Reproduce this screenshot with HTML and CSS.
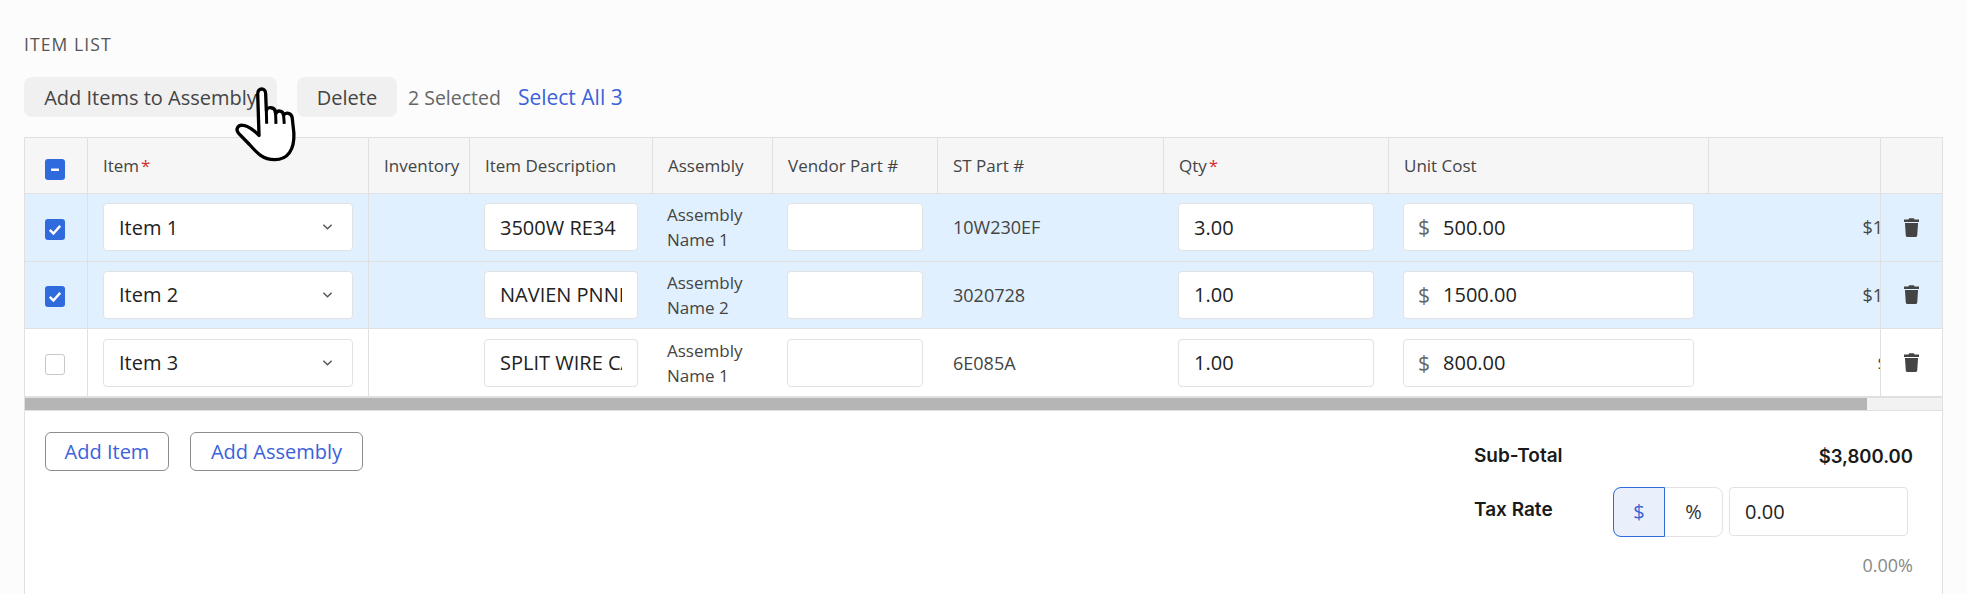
FILE: index.html
```html
<!DOCTYPE html>
<html lang="en">
<head>
    <meta charset="UTF-8">
    <title>Item List</title>
    <link rel="stylesheet" href="styles.css">
</head>
<body>
    <main class="page">
        <h2 class="section-title">Item List</h2>

        <div class="toolbar">
            <button class="btn-gray">Add Items to Assembly</button>
            <button class="btn-gray btn-delete">Delete</button>
            <span class="selected-count">2 Selected</span>
            <a class="select-all">Select All 3</a>
        </div>

        <div class="table-wrap">
            <div class="table-scroll">
                <table class="items">
                    <colgroup>
                        <col class="c-check"><col class="c-item"><col class="c-inv"><col class="c-desc">
                        <col class="c-asm"><col class="c-vendor"><col class="c-part"><col class="c-qty">
                        <col class="c-cost"><col class="c-total"><col class="c-action">
                    </colgroup>
                    <thead>
                        <tr>
                            <th class="cell-check">
                                <span class="box on"><svg viewBox="0 0 20 20"><rect x="6" y="9" width="8" height="2.4" rx=".6" fill="#fff"/></svg></span>
                            </th>
                            <th>Item<span class="req">*</span></th>
                            <th>Inventory</th>
                            <th>Item Description</th>
                            <th>Assembly</th>
                            <th>Vendor Part #</th>
                            <th>ST Part #</th>
                            <th>Qty<span class="req">*</span></th>
                            <th>Unit Cost</th>
                            <th></th>
                            <th class="cell-action"></th>
                        </tr>
                    </thead>
                    <tbody>
                        <tr class="picked">
                            <td class="cell-check"><span class="box on"><svg viewBox="0 0 20 20"><path d="M4.8 10.4l3.6 3.6 6.8-7.6" fill="none" stroke="#fff" stroke-width="2.4"/></svg></span></td>
                            <td class="cell-item">
                                <div class="select-wrap">
                                    <select><option>Item 1</option></select>
                                    <svg class="chevron" viewBox="0 0 12 8"><path d="M1.5 1.5L6 6l4.5-4.5" fill="none" stroke="#555" stroke-width="1.6"/></svg>
                                </div>
                            </td>
                            <td></td>
                            <td><input type="text" value="3500W RE34"></td>
                            <td class="cell-asm">Assembly<br>Name 1</td>
                            <td><input type="text"></td>
                            <td class="cell-part">10W230EF</td>
                            <td><input type="text" value="3.00"></td>
                            <td>
                                <div class="money"><span>$</span><input type="text" value="500.00"></div>
                            </td>
                            <td class="cell-total">$1,500.00</td>
                            <td class="cell-action"><svg class="trash" viewBox="0 0 16 20"><path d="M5.5 0h5l.8 1.5H16v2.6H0V1.5h4.7zM1 5.2h14l-.9 13.2c-.1.9-.8 1.6-1.7 1.6H3.6c-.9 0-1.6-.7-1.7-1.6z" fill="#444"/></svg></td>
                        </tr>
                        <tr class="picked">
                            <td class="cell-check"><span class="box on"><svg viewBox="0 0 20 20"><path d="M4.8 10.4l3.6 3.6 6.8-7.6" fill="none" stroke="#fff" stroke-width="2.4"/></svg></span></td>
                            <td class="cell-item">
                                <div class="select-wrap">
                                    <select><option>Item 2</option></select>
                                    <svg class="chevron" viewBox="0 0 12 8"><path d="M1.5 1.5L6 6l4.5-4.5" fill="none" stroke="#555" stroke-width="1.6"/></svg>
                                </div>
                            </td>
                            <td></td>
                            <td><input type="text" value="NAVIEN PNNPB"></td>
                            <td class="cell-asm">Assembly<br>Name 2</td>
                            <td><input type="text"></td>
                            <td class="cell-part">3020728</td>
                            <td><input type="text" value="1.00"></td>
                            <td>
                                <div class="money"><span>$</span><input type="text" value="1500.00"></div>
                            </td>
                            <td class="cell-total">$1,500.00</td>
                            <td class="cell-action"><svg class="trash" viewBox="0 0 16 20"><path d="M5.5 0h5l.8 1.5H16v2.6H0V1.5h4.7zM1 5.2h14l-.9 13.2c-.1.9-.8 1.6-1.7 1.6H3.6c-.9 0-1.6-.7-1.7-1.6z" fill="#444"/></svg></td>
                        </tr>
                        <tr>
                            <td class="cell-check"><span class="box"></span></td>
                            <td class="cell-item">
                                <div class="select-wrap">
                                    <select><option>Item 3</option></select>
                                    <svg class="chevron" viewBox="0 0 12 8"><path d="M1.5 1.5L6 6l4.5-4.5" fill="none" stroke="#555" stroke-width="1.6"/></svg>
                                </div>
                            </td>
                            <td></td>
                            <td><input type="text" value="SPLIT WIRE CABLE"></td>
                            <td class="cell-asm">Assembly<br>Name 1</td>
                            <td><input type="text"></td>
                            <td class="cell-part">6E085A</td>
                            <td><input type="text" value="1.00"></td>
                            <td>
                                <div class="money"><span>$</span><input type="text" value="800.00"></div>
                            </td>
                            <td class="cell-total">$800.00</td>
                            <td class="cell-action"><svg class="trash" viewBox="0 0 16 20"><path d="M5.5 0h5l.8 1.5H16v2.6H0V1.5h4.7zM1 5.2h14l-.9 13.2c-.1.9-.8 1.6-1.7 1.6H3.6c-.9 0-1.6-.7-1.7-1.6z" fill="#444"/></svg></td>
                        </tr>
                    </tbody>
                </table>
            </div>
            <div class="scroll-track"><div class="scroll-thumb"></div></div>
        </div>

        <section class="summary">
            <div class="add-buttons">
                <button class="btn-outline btn-add-item">Add Item</button>
                <button class="btn-outline btn-add-asm">Add Assembly</button>
            </div>
            <div class="totals">
                <div class="total-row">
                    <span class="total-label">Sub-Total</span>
                    <span class="total-value">$3,800.00</span>
                </div>
                <div class="tax-row">
                    <span class="total-label">Tax Rate</span>
                    <div class="toggle">
                        <span class="toggle-on">$</span>
                        <span class="toggle-off">%</span>
                    </div>
                    <input class="tax-input" type="text" value="0.00">
                </div>
                <div class="tax-percent">0.00%</div>
            </div>
        </section>
    </main>

    <!-- Mouse pointer from the screen recording -->
    <svg class="pointer" viewBox="100 45 195 235">
        <path d="M174 72C174 52 198 52 198 72L200 122C202 110 226 110 227 126L228 132C232 120 250 120 252 136C258 126 276 128 278 144L283 190C285 240 265 270 225 270C190 270 172 250 150 225L118 192C105 178 115 163 132 167C147 170 165 184 178 197Z" fill="#fff" stroke="#000" stroke-width="10" stroke-linejoin="round"/>
        <path d="M200 122L201 162M228 132L229 162M252 136L254 162" fill="none" stroke="#000" stroke-width="9"/>
    </svg>
</body>
</html>
```

FILE: styles.css
```css
/* Basic CSS Reset */
* {
    box-sizing: border-box;
    margin: 0;
    padding: 0;
}

html, body {
    height: 594px;
    overflow: hidden;
}

body {
    background: #fcfcfc;
    color: #333;
    font-family: "Open Sans", "Noto Sans", sans-serif;
    position: relative;
}

.page {
    padding: 34px 24px 0;
}

/* Header */
.section-title {
    font-size: 17.5px;
    line-height: 20px;
    font-weight: 400;
    text-transform: uppercase;
    letter-spacing: 1.1px;
    color: #555;
}

.toolbar {
    display: flex;
    align-items: center;
    margin-top: 23px;
    height: 40px;
    font-size: 20px;
}

.btn-gray {
    height: 40px;
    width: 253px;
    border: 0;
    border-radius: 8px;
    background: #f0f0f0;
    color: #444;
    font: inherit;
}

.btn-delete {
    width: 100px;
    margin-left: 20px;
}

.selected-count {
    margin-left: 11px;
    font-size: 19.5px;
    color: #666;
}

.select-all {
    margin-left: 17px;
    font-size: 21px;
    color: #3b62d9;
}

/* Table */
.table-wrap {
    margin-top: 20px;
    border: 1px solid #e0e0e0;
    border-bottom: 0;
    background: #fff;
}

.table-scroll {
    overflow: hidden;
}

.items {
    table-layout: fixed;
    width: 1996px;
    border-collapse: separate;
    border-spacing: 0;
}

.c-check { width: 63px; }
.c-item { width: 281px; }
.c-inv { width: 101px; }
.c-desc { width: 183px; }
.c-asm { width: 120px; }
.c-vendor { width: 165px; }
.c-part { width: 226px; }
.c-qty { width: 225px; }
.c-cost { width: 320px; }
.c-total { width: 250px; }
.c-action { width: 62px; }

th {
    height: 56px;
    padding: 0 15px;
    background: #f6f6f6;
    border-right: 1px solid #e0e0e0;
    border-bottom: 1px solid #e0e0e0;
    font-size: 17px;
    font-weight: 400;
    color: #444;
    text-align: left;
    white-space: nowrap;
}

th:last-child {
    border-right: 0;
}

th.cell-check {
    padding: 0 0 0 20px;
}

th .box {
    margin-top: 8px;
}

.req {
    margin-left: 2px;
    color: #d32f2f;
}

td {
    height: 67.67px;
    padding: 0 15px 0 14px;
    border-bottom: 1px solid #e0e0e0;
    background: #fff;
}

.picked td {
    background: #e0f0fe;
}

td.cell-check {
    padding: 0 0 0 20px;
    border-right: 1px solid #e0e0e0;
}

td .box {
    margin-top: 4px;
}

td.cell-item {
    padding: 0 15px;
    border-right: 1px solid #e0e0e0;
}

.cell-asm {
    font-size: 17px;
    line-height: 25px;
    color: #444;
}

td.cell-part {
    padding-left: 15px;
    font-size: 18px;
    color: #444;
}

td.cell-total {
    padding-right: 15px;
    text-align: right;
    font-size: 18px;
    color: #444;
}

th.cell-action,
td.cell-action {
    position: sticky;
    right: 0;
    padding: 0;
    text-align: center;
    border-left: 1px solid #e0e0e0;
}

.box {
    display: block;
    width: 20px;
    height: 21px;
    border: 1px solid #c8c8c8;
    border-radius: 3px;
    background: #fff;
}

.box svg {
    display: block;
    width: 20px;
    height: 21px;
}

.box.on {
    border: 0;
    background: #2f6bdc;
}

input, select {
    width: 100%;
    height: 48px;
    padding: 0 15px;
    border: 1px solid #e2e2e2;
    border-radius: 4px;
    background: #fff;
    color: #222;
    font: inherit;
    font-size: 20px;
    outline: 0;
}

select {
    appearance: none;
}

.select-wrap {
    position: relative;
}

.chevron {
    position: absolute;
    top: 20px;
    right: 20px;
    width: 11px;
    height: 8px;
}

.money {
    display: flex;
    align-items: center;
    height: 48px;
    padding-left: 14px;
    border: 1px solid #e2e2e2;
    border-radius: 4px;
    background: #fff;
    font-size: 21px;
    color: #666;
}

.money input {
    height: 46px;
    border: 0;
    padding: 0 10px 0 13px;
}

.trash {
    display: block;
    width: 15px;
    height: 19px;
    margin: 0 auto;
}

/* Fake scrollbar, the browser draws none in the shot */
.scroll-track {
    height: 13px;
    border-top: 1px solid #e0e0e0;
    background: #f2f2f2;
}

.scroll-thumb {
    width: 1842px;
    height: 12px;
    background: #b5b5b5;
}

/* Bottom card */
.summary {
    display: flex;
    justify-content: space-between;
    height: 184px;
    padding: 21px 29px 0 20px;
    background: #fff;
    border: 1px solid #e0e0e0;
    border-bottom: 0;
}

.add-buttons {
    display: flex;
    gap: 21px;
}

.btn-outline {
    height: 39px;
    border: 1px solid #8c8c8c;
    border-radius: 6px;
    background: #fff;
    color: #3b62d9;
    font: inherit;
    font-size: 20px;
}

.btn-add-item { width: 124px; }
.btn-add-asm { width: 173px; }

.totals {
    width: 439px;
    padding-top: 12px;
}

.total-label {
    font-family: Inter, sans-serif;
    font-weight: 600;
    font-size: 19px;
    color: #1a1a1a;
}

.total-row {
    display: flex;
    justify-content: space-between;
    line-height: 24px;
}

.total-value {
    font-family: Inter, sans-serif;
    font-weight: 600;
    font-size: 18.5px;
    color: #1a1a1a;
}

.tax-row {
    display: flex;
    align-items: center;
    margin-top: 19px;
}

.tax-row .total-label {
    width: 139px;
    margin-bottom: 5px;
}

.toggle {
    display: flex;
    width: 110px;
    height: 50px;
    border: 1px solid #e2e2e2;
    border-radius: 8px;
    background: #fff;
    font-size: 20px;
    line-height: 48px;
    text-align: center;
}

.toggle-on {
    width: 52px;
    margin: -1px 0 -1px -1px;
    border: 1px solid #2f6bdc;
    border-radius: 8px 0 0 8px;
    background: #e9effb;
    color: #3b62d9;
}

.toggle-off {
    flex: 1;
}

.tax-input {
    width: 179px;
    height: 49px;
    margin-left: 6px;
}

.tax-percent {
    margin-top: 16px;
    text-align: right;
    font-size: 18px;
    color: #888;
}

/* Pointer overlay */
.pointer {
    position: absolute;
    left: 233px;
    top: 85px;
    width: 65px;
    height: 78px;
}
```
